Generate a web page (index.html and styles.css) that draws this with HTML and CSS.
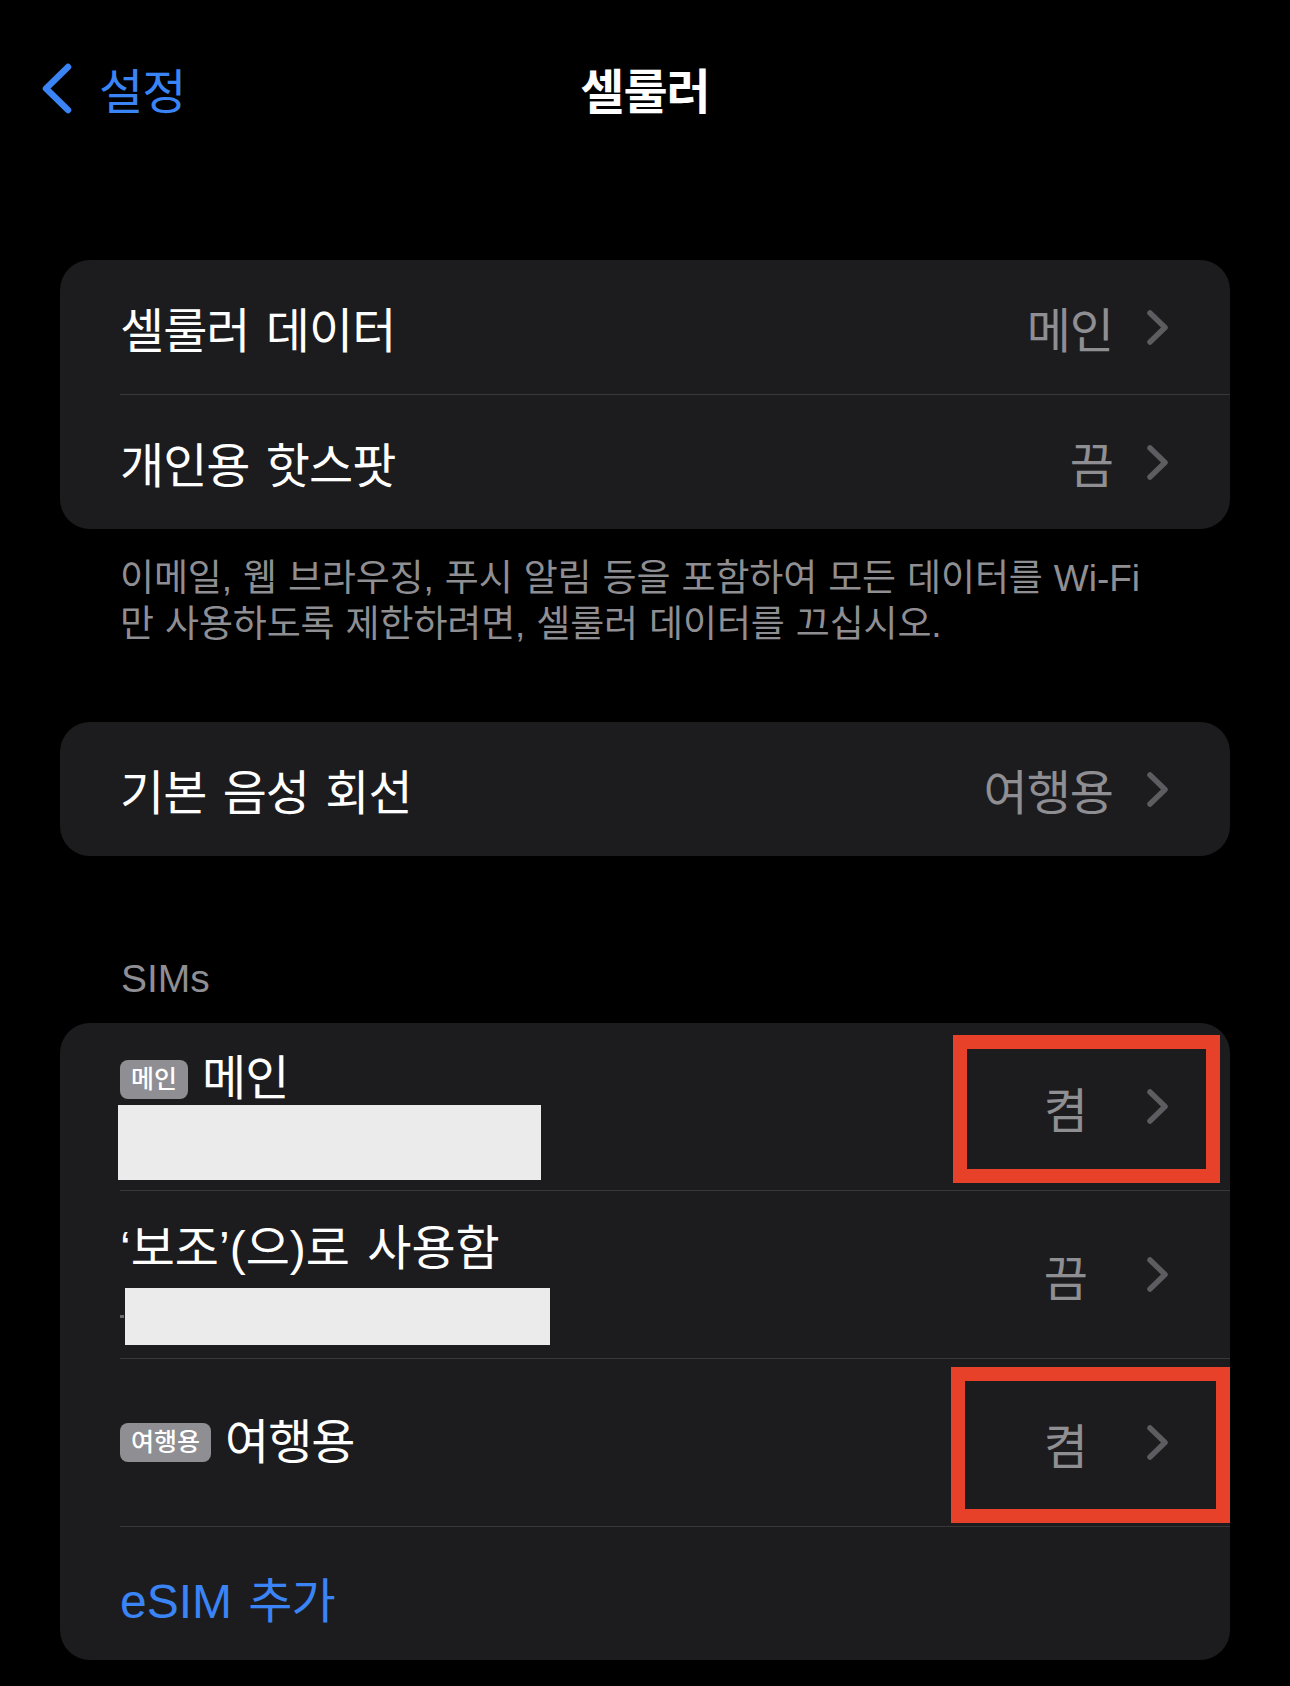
FILE: index.html
```html
<!DOCTYPE html>
<html lang="ko">
    <head>
        <meta charset="UTF-8">
        <title>셀룰러</title>
        <link rel="stylesheet" href="styles.css">
    </head>
    <body>
        <div class="nav">
            <div class="back">
                <svg class="back-icon" viewBox="0 0 33 53"><path d="M28 5 L6 26.5 L28 48"/></svg>
                <span>설정</span>
            </div>
            <div class="title">셀룰러</div>
        </div>

        <div class="group">
            <div class="row">
                <span class="label">셀룰러 데이터</span>
                <span class="value">메인</span>
                <svg class="chev" viewBox="0 0 21 35"><path d="M3 3 L18 17.5 L3 32"/></svg>
            </div>
            <div class="row">
                <span class="label">개인용 핫스팟</span>
                <span class="value">끔</span>
                <svg class="chev" viewBox="0 0 21 35"><path d="M3 3 L18 17.5 L3 32"/></svg>
            </div>
        </div>
        <p class="footer">이메일, 웹 브라우징, 푸시 알림 등을 포함하여 모든 데이터를 <span class="latin">Wi-Fi</span><br>만 사용하도록 제한하려면, 셀룰러 데이터를 끄십시오.</p>

        <div class="group voice">
            <div class="row">
                <span class="label">기본 음성 회선</span>
                <span class="value">여행용</span>
                <svg class="chev" viewBox="0 0 21 35"><path d="M3 3 L18 17.5 L3 32"/></svg>
            </div>
        </div>

        <div class="header">SIMs</div>
        <div class="group">
            <div class="row sim">
                <div class="label first">
                    <div class="sim-name"><span class="badge">메인</span>메인</div>
                    <div class="redact first"></div>
                </div>
                <span class="value">켬</span>
                <svg class="chev" viewBox="0 0 21 35"><path d="M3 3 L18 17.5 L3 32"/></svg>
                <div class="mark mark-one"></div>
            </div>
            <div class="row sim">
                <div class="label second">
                    <div class="sim-name quoted">‘보조’(으)로 사용함</div>
                    <div class="sub">
                        <span class="stub"></span>
                        <div class="redact"></div>
                    </div>
                </div>
                <span class="value">끔</span>
                <svg class="chev" viewBox="0 0 21 35"><path d="M3 3 L18 17.5 L3 32"/></svg>
            </div>
            <div class="row sim">
                <div class="label">
                    <div class="sim-name"><span class="badge">여행용</span>여행용</div>
                </div>
                <span class="value">켬</span>
                <svg class="chev" viewBox="0 0 21 35"><path d="M3 3 L18 17.5 L3 32"/></svg>
                <div class="mark mark-two"></div>
            </div>
            <div class="row add">
                <span class="label"><span class="latin">eSIM</span> 추가</span>
            </div>
        </div>
    </body>
</html>
```

FILE: styles.css
```css
body {
    margin: 0;
    background-color: #000;
    color: #fff;
    font-family: "Liberation Sans", "Noto Sans CJK KR", sans-serif;
    font-size: 48px;
    letter-spacing: -1px;
    word-spacing: 4px;
}

.latin {
    letter-spacing: 0;
}

/* navigation bar */
.nav {
    display: grid;
    grid-template-columns: 1fr auto 1fr;
    align-items: center;
    height: 176px;
    padding: 0 40px;
}

.back {
    display: flex;
    align-items: center;
    gap: 26px;
    color: #3a84f5;
}

.back-icon {
    width: 33px;
    height: 53px;
}

.back-icon path {
    fill: none;
    stroke: #3a84f5;
    stroke-width: 6.5;
    stroke-linecap: round;
    stroke-linejoin: round;
}

.title {
    font-weight: 700;
}

/* grouped lists */
.group {
    position: relative;
    margin: 84px 60px 0;
    border-radius: 30px;
    background-color: #1c1c1e;
}

.row {
    position: relative;
    display: flex;
    align-items: center;
    height: 134px;
    margin-left: 60px;
    padding-right: 62px;
    border-bottom: 1px solid #38383a;
}

.row:last-child {
    border-bottom: none;
}

.label {
    flex: 1;
}

.value {
    margin-right: 34px;
    color: #8e8e93;
}

.chev {
    width: 21px;
    height: 35px;
}

.chev path {
    fill: none;
    stroke: #5c5c61;
    stroke-width: 5.5;
    stroke-linecap: round;
    stroke-linejoin: round;
}

.footer {
    margin: 0 40px 0 120px;
    padding-top: 27px;
    color: #8e8e93;
    font-size: 37px;
    letter-spacing: -0.15px;
    word-spacing: 1px;
    line-height: 46px;
    white-space: nowrap;
}

.group.voice {
    margin-top: 74px;
}

.header {
    margin: 100px 0 0 121px;
    color: #8e8e93;
    font-size: 39px;
    letter-spacing: 0;
    line-height: 46px;
}

.header + .group {
    margin-top: 21px;
}

/* SIM rows */
.row.sim {
    height: auto;
    min-height: 168px;
    box-sizing: border-box;
}

.row.sim .value {
    margin-right: 60px;
}

.label.first {
    padding: 31px 0 10px;
}

.label.second {
    padding: 33px 0 13px;
}

.sim-name {
    display: flex;
    align-items: center;
    line-height: 50px;
}

.sim-name.quoted {
    letter-spacing: 0;
}

.badge {
    margin-right: 14px;
    padding: 0 11px;
    border-radius: 8px;
    background-color: #8e8e93;
    color: #fff;
    font-size: 25px;
    font-weight: 500;
    letter-spacing: 0;
    line-height: 39px;
}

.sub {
    display: flex;
    align-items: center;
    margin-top: 14px;
}

.stub {
    width: 4px;
    height: 3px;
    margin-right: 1px;
    background-color: #6a6a6e;
}

.redact {
    width: 425px;
    height: 57px;
    background-color: #ebebeb;
}

.redact.first {
    width: 423px;
    height: 75px;
    margin: 1px 0 0 -2px;
}

.row.add {
    height: 133px;
    padding-top: 6px;
    box-sizing: border-box;
    color: #3a84f5;
}

/* red annotation boxes */
.mark {
    position: absolute;
    border: 14px solid #e8412a;
    box-sizing: border-box;
}

.mark-one {
    top: 12px;
    right: 10px;
    width: 267px;
    height: 148px;
}

.mark-two {
    top: 8px;
    right: 0;
    width: 279px;
    height: 156px;
}
```
